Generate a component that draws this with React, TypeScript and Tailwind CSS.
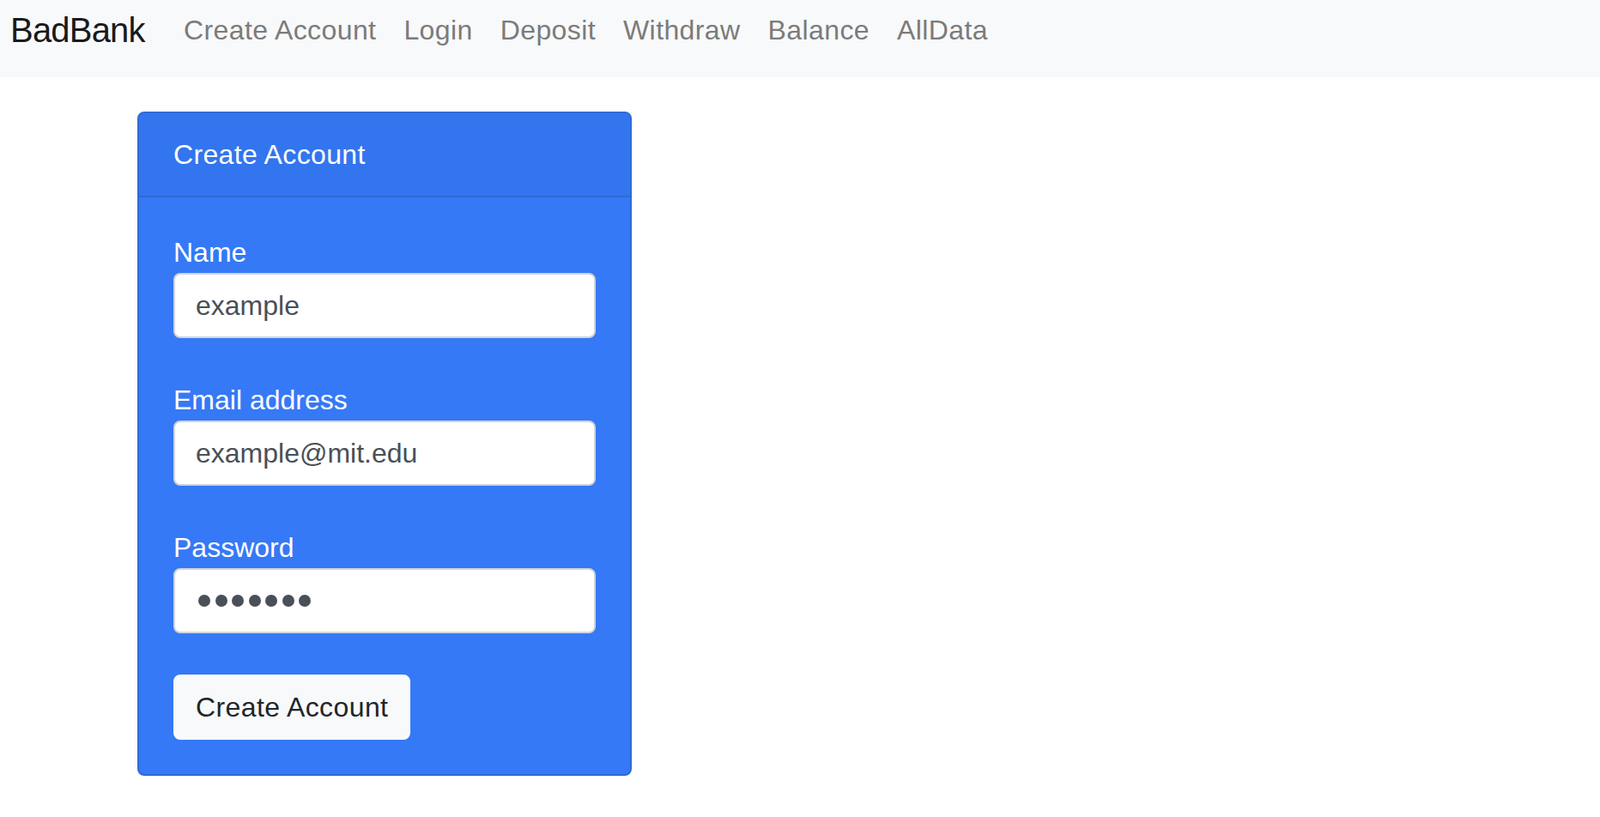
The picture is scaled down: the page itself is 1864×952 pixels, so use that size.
import React from "react";

const navLinks = ["Create Account", "Login", "Deposit", "Withdraw", "Balance", "AllData"];

const Field: React.FC<{ label: string; value?: string; password?: boolean }> = ({
  label,
  value,
  password,
}) => (
  <div className="mb-[48px]">
    <label className="block text-[32px] leading-[48px] text-white">{label}</label>
    {password ? (
      <div className="flex h-[76px] w-full items-center gap-[5.5px] rounded-[8px] border-2 border-[#ced4da] bg-white px-[27px]">
        {Array.from({ length: 7 }).map((_, i) => (
          <span key={i} className="h-[14px] w-[14px] rounded-full bg-[#495057]" />
        ))}
      </div>
    ) : (
      <input
        readOnly
        value={value}
        className="block h-[76px] w-full rounded-[8px] border-2 border-[#ced4da] bg-white px-[24px] text-[32px] text-[#495057] outline-none"
      />
    )}
  </div>
);

export default function App() {
  return (
    <div className="min-h-screen bg-white font-['Liberation_Sans',Arial,sans-serif]">
      {/* Navbar */}
      <nav className="flex h-[90px] items-start bg-[#f8f9fa] pl-[12px] pt-[5px]">
        <span className="w-[186px] text-[40px] leading-[60px] tracking-[-0.8px] text-[#1a1a1a]">
          BadBank
        </span>
        <ul className="flex">
          {navLinks.map((link) => (
            <li key={link} className="px-[16px] text-[32px] leading-[60px] tracking-[0.4px] text-[#7b7b7b]">
              {link}
            </li>
          ))}
        </ul>
      </nav>

      {/* Card */}
      <div className="pl-[160px] pt-[40px]">
        <div className="w-[576px] overflow-hidden rounded-[8px] border-2 border-[#2e6ad6] bg-[#3579f6]">
          <div className="border-b-2 border-[#2e6ad6] bg-[#3375ee] px-[40px] py-[24px] text-[32px] leading-[48px] tracking-[0.35px] text-white">
            Create Account
          </div>
          <div className="p-[40px]">
            <Field label="Name" value="example" />
            <Field label="Email address" value="example@mit.edu" />
            <Field label="Password" password />
            <button className="h-[76px] rounded-[8px] border-2 border-[#f8f9fa] bg-[#f8f9fa] px-[24px] text-[32px] leading-[48px] tracking-[0.4px] text-[#212529]">
              Create Account
            </button>
          </div>
        </div>
      </div>
    </div>
  );
}
